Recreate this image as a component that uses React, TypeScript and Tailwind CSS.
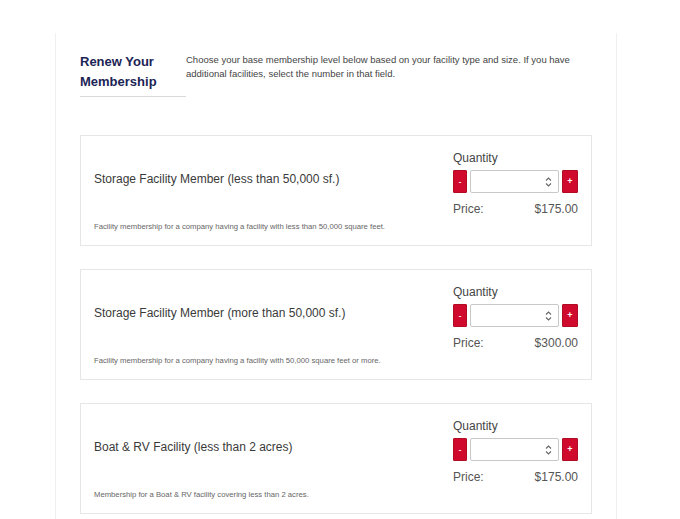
import React from "react";

type Membership = {
  title: string;
  description: string;
  price: string;
};

const memberships: Membership[] = [
  {
    title: "Storage Facility Member (less than 50,000 sf.)",
    description: "Facility membership for a company having a facility with less than 50,000 square feet.",
    price: "$175.00",
  },
  {
    title: "Storage Facility Member (more than 50,000 sf.)",
    description: "Facility membership for a company having a facility with 50,000 square feet or more.",
    price: "$300.00",
  },
  {
    title: "Boat & RV Facility (less than 2 acres)",
    description: "Membership for a Boat & RV facility covering less than 2 acres.",
    price: "$175.00",
  },
];

const Spinner: React.FC = () => (
  <svg width="7" height="10" viewBox="0 0 7 10" fill="none" stroke="#666" strokeWidth="1.1">
    <path d="M1 3.5 L3.5 1 L6 3.5" />
    <path d="M1 6.5 L3.5 9 L6 6.5" />
  </svg>
);

const MembershipCard: React.FC<{ item: Membership }> = ({ item }) => {
  return (
    <div className="flex h-[111px] border border-[#e6e6e6] bg-white pl-[13px] pr-[13px]">
      <div className="flex flex-1 flex-col">
        <div className="mt-[34px] text-[12px] leading-[18px] text-[#3a3a3a]">{item.title}</div>
        <div className="mt-auto mb-[13px] text-[7.7px] leading-[11px] text-[#666]">{item.description}</div>
      </div>
      <div className="flex w-[125px] flex-col pt-[13px]">
        <div className="text-[12px] leading-[18px] text-[#444]">Quantity</div>
        <div className="mt-[3px] flex h-[23px] items-stretch">
          <button className="flex w-[14px] items-center justify-center rounded-[1px] border border-[#b00d24] bg-[#cf0a2c] text-[8px] font-bold leading-none text-white">
            -
          </button>
          <div className="mx-[3px] flex flex-1 items-center justify-end rounded-[2px] border border-[#c8c8c8] bg-white pr-[6px]">
            <Spinner />
          </div>
          <button className="flex w-[16px] items-center justify-center rounded-[1px] border border-[#b00d24] bg-[#cf0a2c] text-[9px] font-bold leading-none text-white">
            +
          </button>
        </div>
        <div className="mt-[8px] flex justify-between text-[12px] leading-[17px] text-[#555]">
          <span>Price:</span>
          <span>{item.price}</span>
        </div>
      </div>
    </div>
  );
};

export default function App() {
  return (
    <div className="min-h-[519px] bg-white" style={{ fontFamily: '"Liberation Sans", Arial, sans-serif' }}>
      <div className="ml-[55px] mt-[33px] w-[562px] border-x border-[#f0f0f0] px-[24px] pb-[20px]">
        <div className="flex pt-[19px]">
          <div className="w-[106px] shrink-0">
            <h1 className="pb-[4px] text-[13px] font-bold leading-[20px] text-[#1b2455]">
              Renew Your
              <br />
              Membership
            </h1>
            <div className="h-px bg-[#d9d9d9]" />
          </div>
          <p className="pt-[1px] text-[9.5px] leading-[14px] text-[#444]">
            Choose your base membership level below based on your facility type and size. If you have additional
            facilities, select the number in that field.
          </p>
        </div>
        <div className="mt-[38px] flex flex-col gap-[23px]">
          {memberships.map((m) => (
            <MembershipCard key={m.title} item={m} />
          ))}
        </div>
      </div>
    </div>
  );
}
